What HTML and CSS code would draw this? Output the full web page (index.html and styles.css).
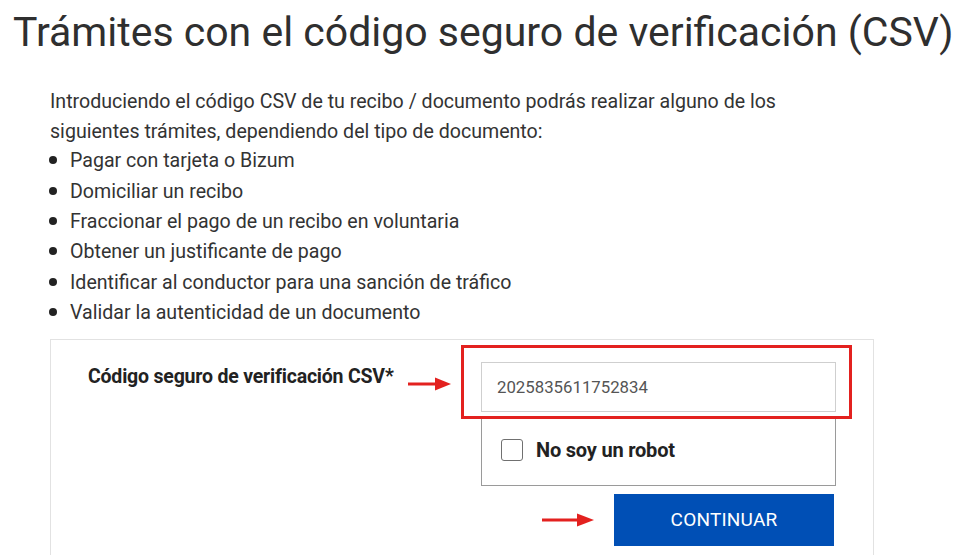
FILE: index.html
```html
<!DOCTYPE html>
<html lang="es">
<head>
<meta charset="utf-8">
<title>Trámites con el código seguro de verificación (CSV)</title>
<link rel="stylesheet" href="styles.css">
</head>
<body>
<h1 class="title">Trámites con el código seguro de verificación (CSV)</h1>
<div class="content">
  <p class="intro">Introduciendo el código CSV de tu recibo / documento podrás realizar alguno de los siguientes trámites, dependiendo del tipo de documento:</p>
  <ul class="tasks">
    <li>Pagar con tarjeta o Bizum</li>
    <li>Domiciliar un recibo</li>
    <li>Fraccionar el pago de un recibo en voluntaria</li>
    <li>Obtener un justificante de pago</li>
    <li>Identificar al conductor para una sanción de tráfico</li>
    <li>Validar la autenticidad de un documento</li>
  </ul>
  <form class="csv-form">
    <div class="label-cell">
      <label class="csv-label" for="csv">Código seguro de verificación CSV*</label>
      <svg class="arrow arrow-label" width="43" height="14" viewBox="0 0 43 14"><path d="M0 7 H30" stroke="#e3211f" stroke-width="3"/><path d="M27 0.5 L43 7 L27 13.5 Z" fill="#e3211f"/></svg>
    </div>
    <div class="field-cell">
      <div class="input-wrap">
        <input id="csv" class="csv-input" type="text" value="2025835611752834">
        <span class="highlight"></span>
      </div>
      <div class="captcha">
        <span class="checkbox"></span>
        <span class="captcha-text">No soy un robot</span>
      </div>
      <div class="actions">
        <svg class="arrow" width="52" height="14" viewBox="0 0 52 14"><path d="M0 7 H38" stroke="#e3211f" stroke-width="3"/><path d="M35 0.5 L52 7 L35 13.5 Z" fill="#e3211f"/></svg>
        <button type="button" class="btn-continue">CONTINUAR</button>
      </div>
    </div>
  </form>
</div>
</body>
</html>
```

FILE: styles.css
```css
html, body {
  margin: 0;
  padding: 0;
  background: #ffffff;
}
body {
  font-family: Roboto, "Noto Sans", "Liberation Sans", sans-serif;
  color: #333333;
  overflow: hidden;
}
.title {
  margin: 0;
  padding: 5px 0 0 13px;
  font-size: 41px;
  font-weight: 400;
  line-height: 54px;
  color: #2f2f2f;
  white-space: nowrap;
}
.content {
  padding: 28px 0 0 50px;
}
.intro {
  margin: 0;
  width: 800px;
  font-size: 19.6px;
  line-height: 29.6px;
}
.tasks {
  margin: 0;
  padding: 0 0 0 20px;
  list-style: none;
  font-size: 19.6px;
  line-height: 30.4px;
}
.tasks li::before {
  content: "";
  display: inline-block;
  width: 8px;
  height: 8px;
  border-radius: 50%;
  background: #222;
  margin-left: -21px;
  margin-right: 13px;
  vertical-align: 3px;
}
.csv-form {
  margin-top: 10px;
  width: 824px;
  height: 260px;
  box-sizing: border-box;
  border: 1px solid #e2e2e2;
  border-bottom: none;
  padding: 22px 0 0 37px;
  display: grid;
  grid-template-columns: 393px 355px;
  align-items: start;
}
.label-cell {
  display: flex;
  align-items: center;
  gap: 14px;
  padding-top: 1px;
}
.csv-label {
  font-size: 19.5px;
  font-weight: 700;
  color: #222;
  letter-spacing: -0.2px;
}
.arrow-label {
  margin-top: 14px;
}
.field-cell {
  display: flex;
  flex-direction: column;
}
.input-wrap {
  position: relative;
}
.csv-input {
  display: block;
  width: 355px;
  height: 50px;
  box-sizing: border-box;
  border: 1px solid #cfcfcf;
  padding: 0 15px;
  font-family: inherit;
  font-size: 16.8px;
  color: #555;
  background: #fff;
}
.highlight {
  position: absolute;
  left: -20px;
  top: -17px;
  right: -16px;
  bottom: -7px;
  border: 3px solid #e3211f;
  pointer-events: none;
}
.captcha {
  margin-top: 6px;
  height: 68px;
  box-sizing: border-box;
  border: 1px solid #9a9a9a;
  border-top: none;
  display: flex;
  align-items: center;
  gap: 13px;
  padding: 0 0 2px 19px;
}
.checkbox {
  width: 20px;
  height: 20px;
  border: 1px solid #707070;
  border-radius: 3px;
  background: #fff;
}
.captcha-text {
  font-size: 20px;
  font-weight: 700;
  color: #222;
  letter-spacing: -0.2px;
}
.actions {
  margin-top: 8px;
  display: flex;
  align-items: center;
  justify-content: flex-end;
  gap: 20px;
  padding-right: 2px;
}
.btn-continue {
  width: 220px;
  height: 52px;
  border: none;
  background: #004fb5;
  color: #fff;
  font-family: inherit;
  font-size: 19px;
  font-weight: 400;
  letter-spacing: 0.2px;
}
```
